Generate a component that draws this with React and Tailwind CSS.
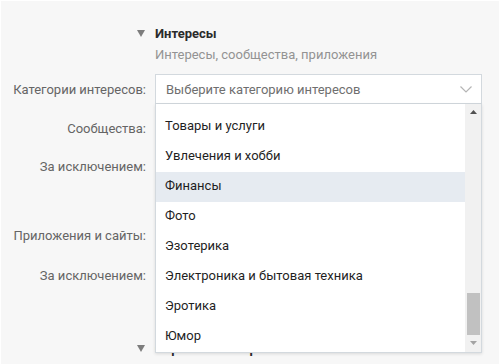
import React from 'react';

const ITEMS = [
  'Товары и услуги',
  'Увлечения и хобби',
  'Финансы',
  'Фото',
  'Эзотерика',
  'Электроника и бытовая техника',
  'Эротика',
  'Юмор',
];

function Caret() {
  return (
    <svg width="8" height="7" viewBox="0 0 8 7">
      <polygon points="0,0 8,0 4,7" fill="#7d7d7d" />
    </svg>
  );
}

function Label({ children, className = '' }) {
  return (
    <div className={`flex items-center justify-end text-[#656565] ${className}`}>{children}</div>
  );
}

export default function App() {
  return (
    <div className="relative h-[364px] w-[499px] overflow-hidden border-l border-t border-white bg-[#f7f7f7] font-['Roboto','Liberation_Sans',sans-serif] text-[13px] leading-none">
      <div className="grid grid-cols-[145px_327px] gap-x-[9px] pt-[22px]">
        {/* header */}
        <div className="flex h-[20px] items-center justify-end pr-[1px]">
          <Caret />
        </div>
        <div className="flex h-[20px] items-center font-bold text-[#2b2b2b]">Интересы</div>

        <div />
        <div className="mt-[1px] flex h-[20px] items-center text-[#939393]">
          Интересы, сообщества, приложения
        </div>

        {/* interests select */}
        <Label className="mt-[10px] h-[30px]">Категории интересов:</Label>
        <div className="relative z-10 mt-[10px]">
          <div className="flex h-[30px] items-center justify-between border border-[#d3d9de] bg-white pl-[10px] pr-[9px] text-[#6f6f6f]">
            <span>Выберите категорию интересов</span>
            <svg width="12" height="7" viewBox="0 0 12 7">
              <polyline points="0.5,0.5 6,6 11.5,0.5" fill="none" stroke="#b5b5b5" strokeWidth="1.2" />
            </svg>
          </div>

          {/* dropdown menu */}
          <div className="absolute left-0 top-full flex h-[249px] w-[327px] border border-t-0 border-[#d3d9de] bg-white shadow-[0_1px_3px_rgba(0,0,0,0.12)]">
            <div className="flex-1 overflow-hidden pt-[8px]">
              {ITEMS.map((item) => (
                <div
                  key={item}
                  className={`flex h-[30px] items-center pb-[3px] pl-[9px] text-[#1f1f1f] ${item === 'Финансы' ? 'bg-[#e6ebf1]' : ''}`}
                >
                  {item}
                </div>
              ))}
            </div>
            <div className="flex w-[16px] flex-col items-center bg-[#f1f1f1]">
              <svg className="mt-[6px]" width="7" height="4" viewBox="0 0 7 4">
                <polygon points="3.5,0 7,4 0,4" fill="#505050" />
              </svg>
              <div className="mt-[179px] h-[42px] w-[13px] bg-[#c1c1c1]" />
              <svg className="mt-[6px]" width="7" height="4" viewBox="0 0 7 4">
                <polygon points="0,0 7,0 3.5,4" fill="#a3a3a3" />
              </svg>
            </div>
          </div>
        </div>

        {/* communities */}
        <Label className="mt-[9px] h-[30px]">Сообщества:</Label>
        <div className="mt-[9px] h-[30px]" />

        <Label className="mt-[8px] h-[30px]">За исключением:</Label>
        <div className="mt-[8px] h-[30px]" />

        {/* apps */}
        <Label className="mt-[39px] h-[30px]">Приложения и сайты:</Label>
        <div className="mt-[39px] h-[30px]" />

        <Label className="mt-[10px] h-[30px]">За исключением:</Label>
        <div className="mt-[10px] h-[30px]" />

        {/* next section, under the menu */}
        <div className="mt-[48px] flex h-[20px] items-center justify-end pr-[1px]">
          <Caret />
        </div>
        <div className="mt-[48px] flex h-[20px] items-center font-bold text-[#2b2b2b]">
          Образование и работа
        </div>
      </div>
    </div>
  );
}
